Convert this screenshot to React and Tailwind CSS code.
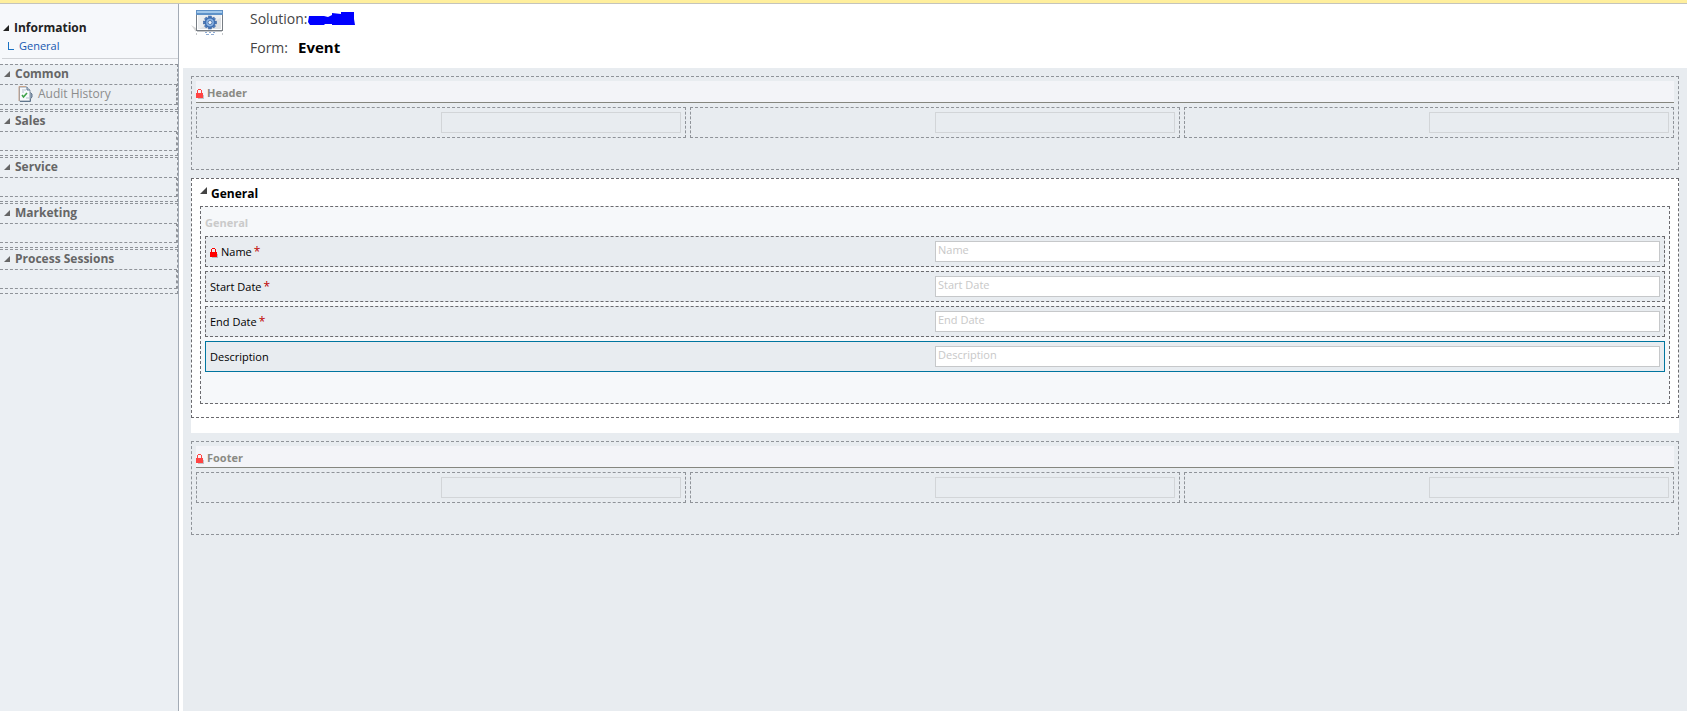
import { useState } from "react";

const NAV_GROUPS = [
  { name: "Common", items: ["Audit History"] },
  { name: "Sales", items: [] },
  { name: "Service", items: [] },
  { name: "Marketing", items: [] },
  { name: "Process Sessions", items: [] },
];

const FIELDS = [
  { id: "name", label: "Name", required: true, locked: true },
  { id: "startDate", label: "Start Date", required: true },
  { id: "endDate", label: "End Date", required: true },
  { id: "description", label: "Description" },
];

const Triangle = ({ className }) => (
  <svg viewBox="0 0 6 6" className={className} aria-hidden="true">
    <path d="M6 0V6H0Z" fill="currentColor" />
  </svg>
);

const LockIcon = ({ className }) => (
  <svg viewBox="0 0 8 10" className={className} shapeRendering="crispEdges" aria-hidden="true">
    <path d="M2 9.500H7.500V6" fill="none" stroke="#000" strokeOpacity="0.200" />
    <path d="M2 0H5V1H2ZM1 1H2V4H1ZM5 1H6V4H5Z" fill="currentColor" />
    <rect x="0" y="4" width="7" height="5" fill="currentColor" />
  </svg>
);

const AuditIcon = () => (
  <svg viewBox="0 0 16 16" className="h-4 w-4 shrink-0" aria-hidden="true">
    <path d="M11 5.500L14 8V11L11 14.500Z" fill="#8fa3b8" stroke="#5c7188" />
    <path d="M1.500 1H9L12 4V15H1.500Z" fill="#f8fafc" stroke="#8d9bab" />
    <path d="M1 0.500V15M1 0.500H8" stroke="#c9a58c" />
    <path d="M9 1V4H12" fill="#c8d3de" stroke="#5e7690" />
    <path d="M4 4H8M4 6H6M8 12H11" stroke="#b5c1ce" />
    <path d="M4 9L5.500 11L9 7" fill="none" stroke="#3fa34a" strokeWidth="1.600" />
    <path d="M2 15.500H12.500V13" fill="none" stroke="#60758b" />
  </svg>
);

const teeth = [0, 45, 90, 135, 180, 225, 270, 315];

const FormIcon = () => (
  <svg viewBox="0 0 32 28" className="h-7 w-8 shrink-0" aria-hidden="true">
    <path d="M0 16L5 19V23Z" fill="#d8d8d8" />
    <rect x="5.500" y="1.500" width="26" height="20" fill="#eceef0" stroke="#777d84" />
    <path d="M6 21L31 8V21Z" fill="#dfe1e4" />
    <rect x="5" y="1" width="27" height="5" rx="1" fill="#5f92c8" />
    <rect x="6" y="2" width="25" height="2" fill="#a3c8ea" />
    <path d="M6.500 6V20.500H30.500V6" fill="none" stroke="#fff" />
    <path d="M5.500 24V26M31.500 24V26M6 22.500H31" stroke="#c4c7ca" />
    <g fill="#4f7fc0" stroke="#2d5796" strokeWidth="0.500">
      {teeth.map((deg) => (
        <rect key={deg} x="17.600" y="7" width="2.800" height="3.500" transform={`rotate(${deg} 19 13.500)`} />
      ))}
      <circle cx="19" cy="13.500" r="4.900" />
    </g>
    <circle cx="19" cy="13.500" r="3.700" fill="#8fb6e4" />
    <circle cx="19" cy="13.500" r="2" fill="#f4f7fb" stroke="#2d5796" strokeWidth="0.700" />
    <path d="M14 23.500H16M18 23.500H20M22 23.500H24M15 25.500H18M20 25.500H23" stroke="#8fabd2" />
  </svg>
);

const NavGroup = ({ name, items }) => {
  const [open, setOpen] = useState(true);

  return (
    <section className="mb-px border-y border-r border-dashed border-[#8f9399] pb-1">
      <h2 className="h-[19px]">
        <button
          type="button"
          onClick={() => setOpen(!open)}
          className="flex h-full w-full items-center gap-[5px] pb-[2px] pl-1 text-xs font-bold text-[#666]"
        >
          <Triangle className="h-[6px] w-[6px]" />
          {name}
        </button>
      </h2>
      {open && (
        <ul className="min-h-5 border-y border-r border-dashed border-[#8f9399]">
          {items.map((item) => (
            <li key={item}>
              <a href="#audit" className="flex h-[19px] items-center gap-1 pb-px pl-[18px] text-xs text-[#8c8c8c]">
                <AuditIcon />
                {item}
              </a>
            </li>
          ))}
        </ul>
      )}
    </section>
  );
};

const Sidebar = () => (
  <nav className="w-[179px] shrink-0 border-r border-[#a3abb5] bg-[#ebeff3]">
    <div className="bg-[#f6f8fb] pb-[5px] pl-[2px]">
      <div className="h-[55px] border-b border-[#d0d2d6] pt-[14px]">
        <button type="button" className="flex h-5 items-center gap-[5px] pl-px text-xs font-bold text-[#222]">
          <Triangle className="h-[6px] w-[6px]" />
          Information
        </button>
        <a href="#general" className="flex h-4 items-center gap-[5px] pl-[6px] text-[11px] text-[#1557b0]">
          <span className="h-2 w-[6px] border-b border-l border-[#1a72c4]" />
          General
        </a>
      </div>
    </div>
    {NAV_GROUPS.map((group) => (
      <NavGroup key={group.name} {...group} />
    ))}
  </nav>
);

const TitleBar = () => (
  <header className="flex h-16 pl-2">
    <div className="pt-[5px]">
      <FormIcon />
    </div>
    <dl className="pl-[27px] pt-[3px] text-sm text-[#444]">
      <div className="flex h-6 items-center">
        <dt>Solution:</dt>
        <dd className="pl-px">
          <svg viewBox="0 0 48 14" className="h-[14px] w-12" aria-hidden="true">
            <path d="M1 4H16L20 5L24 3V1L33 2V0H46V7L47 13H24V12H17L16 13H2L0 10Z" fill="#0000ff" />
          </svg>
        </dd>
      </div>
      <div className="flex h-[34px] items-center">
        <dt>Form:</dt>
        <dd className="pl-[10px] text-[15px] font-bold text-black">Event</dd>
      </div>
    </dl>
  </header>
);

const LockedSection = ({ title }) => (
  <section className="border border-dashed border-[#8f9399] p-1 pb-[31px]">
    <h2 className="flex h-[22px] items-center gap-[3px] border-b border-[#85867f] bg-[#f3f4f8] pt-1 text-[11px] font-bold text-[#8a8a84]">
      <LockIcon className="h-[10px] w-2 text-[#ff4343]" />
      {title}
    </h2>
    <div className="mt-1 grid grid-cols-3 gap-1">
      {[1, 2, 3].map((col) => (
        <div key={col} className="flex justify-end border border-dashed border-[#8f9399] p-1">
          <input
            type="text"
            readOnly
            aria-label={`${title} ${col}`}
            className="h-[21px] w-1/2 border border-[#d2d5d8] bg-transparent px-[2px] text-[11px]"
          />
        </div>
      ))}
    </div>
  </section>
);

const FieldRow = ({ field, selected, onSelect }) => (
  <div
    onClick={onSelect}
    className={`flex border bg-[#e8ecf0] p-1 text-[11px] ${
      selected ? "border-[#00759f]" : "border-dashed border-[#6a6a6e]"
    }`}
  >
    <label htmlFor={field.id} className="flex h-[21px] w-1/2 items-center pt-[2px] text-black">
      {field.locked && <LockIcon className="mr-[3px] h-[10px] w-2 text-[#ff0000]" />}
      {field.label}
      {field.required && <span className="pb-[2px] pl-[2px] text-xs leading-4 text-[#c00000]">*</span>}
    </label>
    <input
      id={field.id}
      type="text"
      placeholder={field.label}
      className="h-[21px] w-1/2 border border-[#c6c8ca] bg-white px-[2px] pb-1 leading-4 placeholder:text-[#c8c8c8] focus:outline-none"
    />
  </div>
);

const GeneralTab = () => {
  const [selectedId, setSelectedId] = useState("description");

  return (
    <div className="bg-white pb-[15px]">
      <section className="border border-dashed border-[#6a6a6e] px-2 pb-[13px]">
        <h2 className="h-[27px]">
          <button type="button" className="flex h-full items-center gap-1 pt-[3px] text-xs font-bold text-black">
            <Triangle className="mb-2 h-[7px] w-[7px] text-[#444]" />
            General
          </button>
        </h2>
        <div className="border border-dashed border-[#6a6a6e] bg-[#f6f8fa] px-1 pb-[31px]">
          <h3 className="flex h-[29px] items-center pt-1 text-[11px] font-bold text-[#cacaca]">General</h3>
          <div className="flex flex-col gap-1">
            {FIELDS.map((field) => (
              <FieldRow
                key={field.id}
                field={field}
                selected={field.id === selectedId}
                onSelect={() => setSelectedId(field.id)}
              />
            ))}
          </div>
        </div>
      </section>
    </div>
  );
};

export default function App() {
  return (
    <div className="flex min-h-screen flex-col bg-white font-['Open_Sans','Noto_Sans',sans-serif]">
      <div className="h-1 shrink-0 border-b border-[#c4c4bc] bg-[#ffef9d]" />
      <div className="flex flex-1">
        <Sidebar />
        <div className="flex min-w-0 flex-1 flex-col pl-1">
          <TitleBar />
          <main className="flex flex-1 flex-col gap-2 bg-[#e8ecf0] p-2">
            <LockedSection title="Header" />
            <GeneralTab />
            <LockedSection title="Footer" />
          </main>
        </div>
      </div>
    </div>
  );
}
